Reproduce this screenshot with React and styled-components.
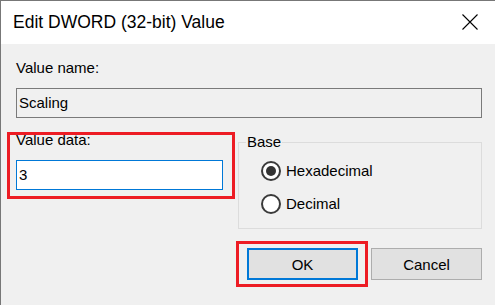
import styled, { createGlobalStyle } from "styled-components";

const GlobalStyle = createGlobalStyle`
  html, body {
    margin: 0;
    padding: 0;
    background: #f0f0f0;
  }
  body {
    font-family: "Liberation Sans", Arial, sans-serif;
    color: #000;
  }
`;

const Window = styled.div`
  box-sizing: border-box;
  width: 495px;
  height: 305px;
  border-top: 1px solid #777;
  border-left: 1px solid #777;
  background: #f0f0f0;
  display: flex;
  flex-direction: column;
  overflow: hidden;
`;

const TitleBar = styled.div`
  height: 43px;
  background: #fff;
  display: flex;
  align-items: center;
  justify-content: space-between;
  padding: 0 17px 0 12px;
`;

const Title = styled.div`
  font-size: 17.5px;
  line-height: 20px;
  padding-bottom: 1px;
`;

const CloseButton = styled.div`
  width: 16px;
  height: 16px;
  display: flex;
  margin-bottom: 1px;
`;

const Body = styled.div`
  padding: 14px 13px 0 15px;
  font-size: 15px;
`;

const Label = styled.div`
  height: 20px;
  line-height: 20px;
  margin-top: ${(p) => p.$top || 0}px;
  margin-bottom: ${(p) => p.$gap || 10}px;
`;

const TextBox = styled.div`
  box-sizing: border-box;
  height: 30px;
  border: 1px solid ${(p) => (p.$focused ? "#0078d7" : "#7a7a7a")};
  background: ${(p) => (p.$readOnly ? "#f0f0f0" : "#fff")};
  display: flex;
  align-items: center;
  padding: 0 2px;
  line-height: 20px;
`;

const Row = styled.div`
  display: grid;
  grid-template-columns: 207px 1fr;
  align-items: start;
  column-gap: 15px;
  margin-top: 9px;
`;

const Highlighted = styled.div`
  position: relative;

  &::after {
    content: "";
    position: absolute;
    top: ${(p) => p.$top}px;
    right: ${(p) => p.$right}px;
    bottom: ${(p) => p.$bottom}px;
    left: ${(p) => p.$left}px;
    border: 3px solid #ed1c24;
    pointer-events: none;
  }
`;

const GroupBox = styled.fieldset`
  margin: 5px 0 0 0;
  padding: 0 0 8px 0;
  border: 1px solid #dcdcdc;
  min-width: 0;
`;

const Legend = styled.legend`
  margin-left: 7px;
  padding: 0 1px;
  line-height: 20px;
  font-size: 15px;
`;

const RadioRow = styled.label`
  display: flex;
  align-items: center;
  height: 33px;
  padding-left: 22px;
  gap: 5px;
  &:first-of-type {
    margin-top: 2px;
  }
`;

const RadioCircle = styled.span`
  box-sizing: border-box;
  width: 20px;
  height: 20px;
  border-radius: 50%;
  border: 2px solid #3a3a3a;
  background: #fff;
  display: flex;
  align-items: center;
  justify-content: center;

  &::after {
    content: "";
    width: 10px;
    height: 10px;
    border-radius: 50%;
    background: ${(p) => (p.$checked ? "#333" : "transparent")};
  }
`;

const ButtonRow = styled.div`
  display: flex;
  justify-content: flex-end;
  gap: 13px;
  margin-top: 19px;
`;

const Button = styled.div`
  box-sizing: border-box;
  width: 111px;
  height: 32px;
  background: #e1e1e1;
  border: ${(p) => (p.$default ? "2px solid #0078d7" : "1px solid #adadad")};
  display: flex;
  align-items: center;
  justify-content: center;
  font-size: 15px;
`;

const Radio = ({ checked, children }) => (
  <RadioRow>
    <RadioCircle $checked={checked} />
    <span>{children}</span>
  </RadioRow>
);

const App = () => {
  return (
    <>
      <GlobalStyle />
      <Window>
        <TitleBar>
          <Title>Edit DWORD (32-bit) Value</Title>
          <CloseButton>
            <svg width="16" height="16" viewBox="0 0 16 16">
              <path d="M0.5 0.5 L15.5 15.5 M15.5 0.5 L0.5 15.5" stroke="#000" strokeWidth="1.1" fill="none" />
            </svg>
          </CloseButton>
        </TitleBar>
        <Body>
          <Label>Value name:</Label>
          <TextBox $readOnly>Scaling</TextBox>
          <Row>
            <Highlighted $top={5} $right={-12} $bottom={-9} $left={-9}>
              <Label $top={3} $gap={10}>Value data:</Label>
              <TextBox $focused>3</TextBox>
            </Highlighted>
            <GroupBox>
              <Legend>Base</Legend>
              <Radio checked>Hexadecimal</Radio>
              <Radio>Decimal</Radio>
            </GroupBox>
          </Row>
          <ButtonRow>
            <Highlighted $top={-7} $right={-10} $bottom={-7} $left={-11}>
              <Button $default>OK</Button>
            </Highlighted>
            <Button>Cancel</Button>
          </ButtonRow>
        </Body>
      </Window>
    </>
  );
};

export default App;
